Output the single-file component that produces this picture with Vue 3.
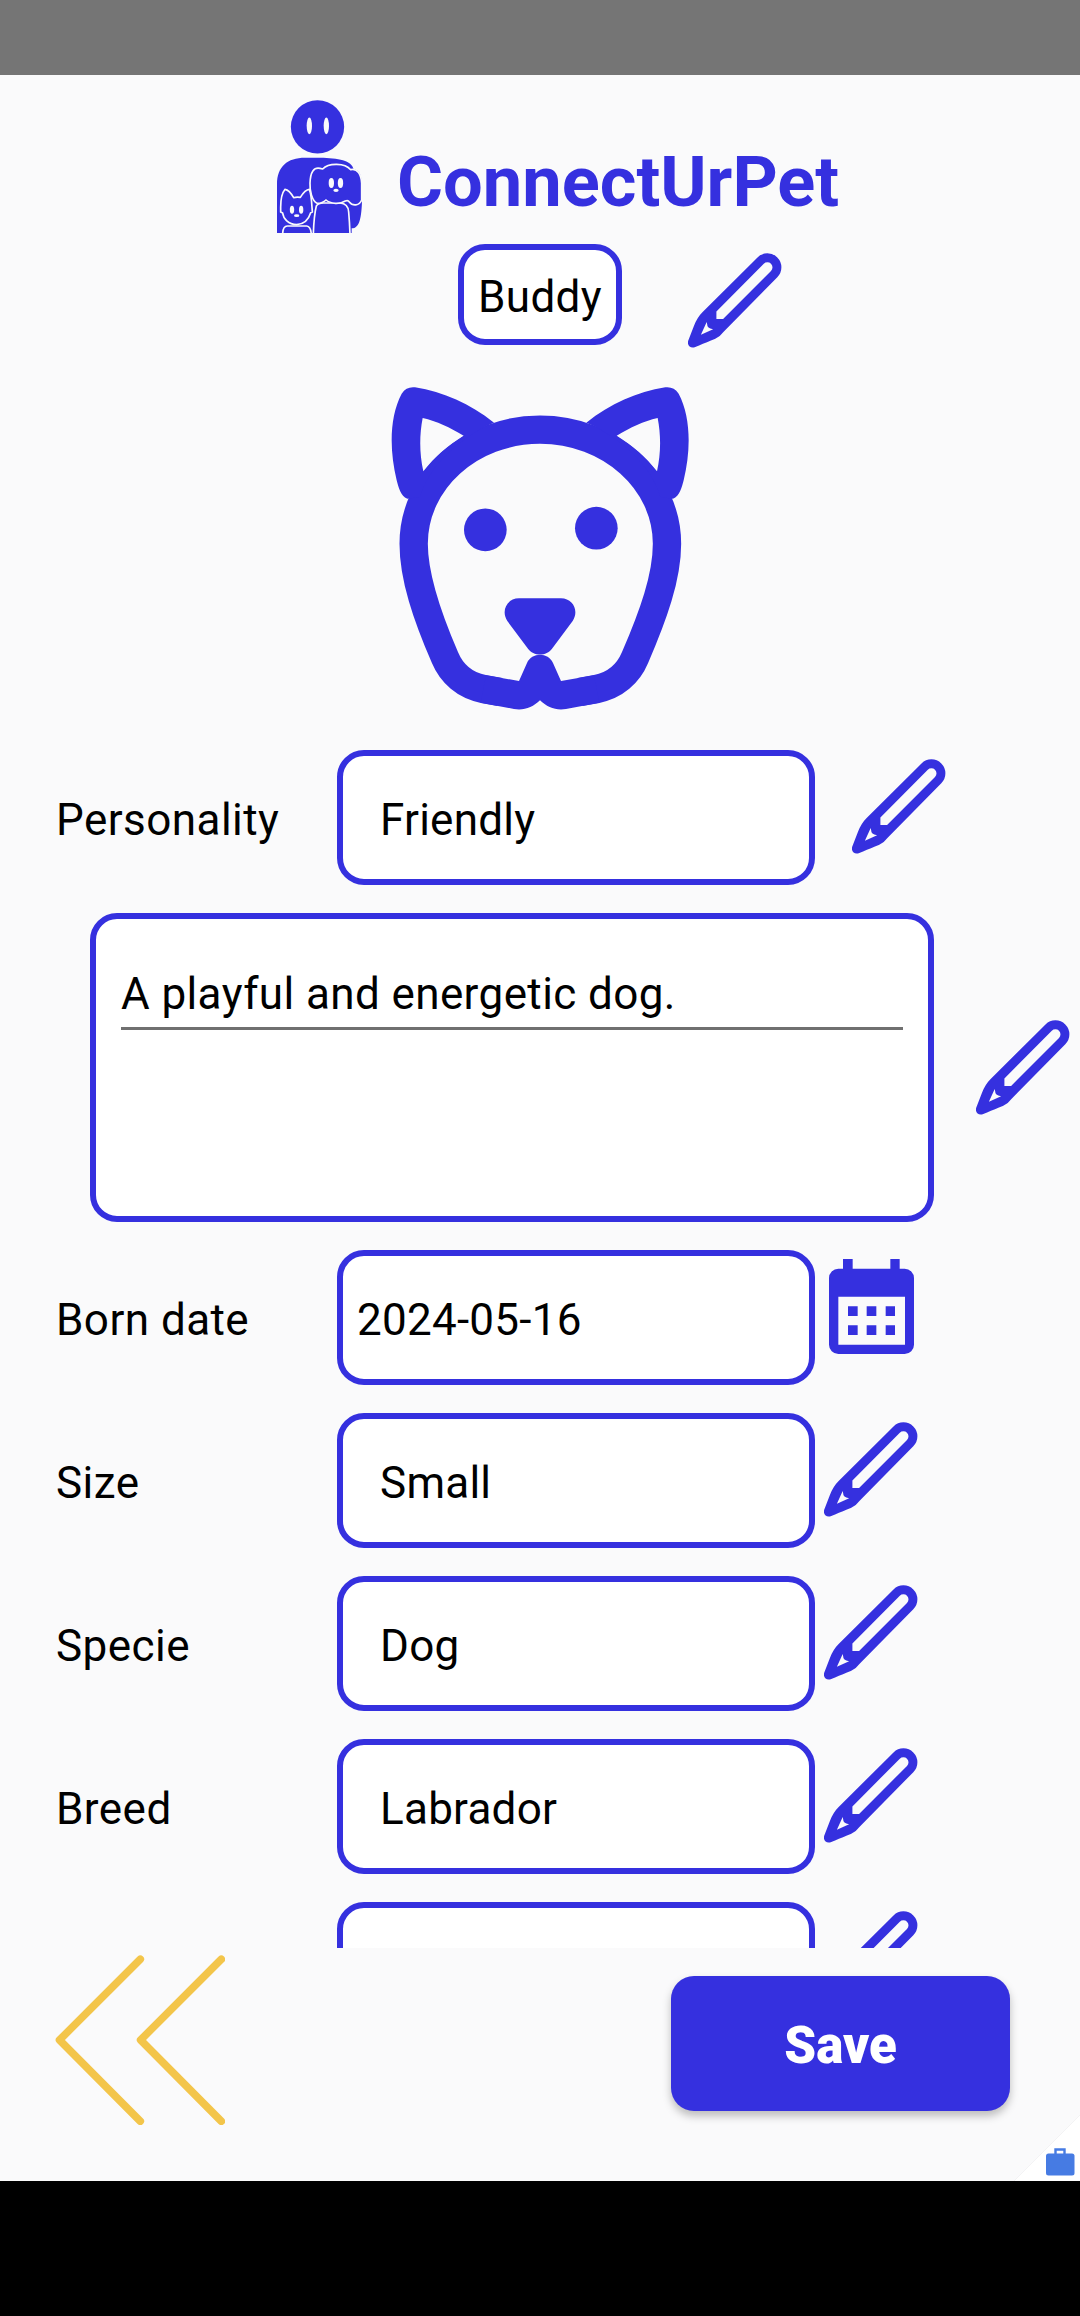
<script setup>
import { h } from 'vue'

const rows = [
  { label: 'Born date', value: '2024-05-16', icon: 'calendar' },
  { label: 'Size', value: 'Small', icon: 'pencil' },
  { label: 'Specie', value: 'Dog', icon: 'pencil' },
  { label: 'Breed', value: 'Labrador', icon: 'pencil' },
  { label: '', value: '', icon: 'pencil' },
]

const PencilIcon = () =>
  h('svg', { width: 94, height: 95, viewBox: '-0.7 0 94 95', fill: '#3530df' }, [
    h('path', {
      'fill-rule': 'evenodd',
      d: 'M68.8 4.4A14 14 0 0 1 88.6 24.2L35.2 78.4Q31.5 83.2 27 85.6Q24.5 87 6 94.2C1.5 95.8-2 91.8-.4 87.6L5.2 73Q8.4 64.6 13.7 59.3ZM75.1 10.7L27.7 58.4V66H34.4L82.3 17.9A5 5 0 0 0 75.1 10.7ZM18 69L12.2 81.8L24.4 76.2L21.6 75.4Q18.5 74.6 18.5 71.6Z',
    }),
  ])

const CalendarIcon = () =>
  h('svg', { width: 85, height: 95, viewBox: '87 57 255 285', fill: '#3530df' }, [
    h('path', {
      'fill-rule': 'evenodd',
      d: 'M129 57H158V86H271V57H299V86H314A28 28 0 0 1 342 114V314A28 28 0 0 1 314 342H115A28 28 0 0 1 87 314V114A28 28 0 0 1 115 86H129ZM115 170V314H315V170Z',
    }),
    h('path', {
      d: 'M144 199h29v29h-29zM200 199h29v29h-29zM257 199h28v29h-28zM144 256h29v29h-29zM200 256h29v29h-29zM257 256h28v29h-28z',
    }),
  ])
</script>

<template>
  <div class="screen">
    <div class="status-bar"></div>
    <main class="scroller">
      <header class="brand">
        <svg class="logo" width="86" height="133" viewBox="51 120 258 399" fill="#3530df">
          <circle cx="172.500" cy="200.500" r="80" />
          <g fill="#fafafb">
            <ellipse cx="148" cy="197.500" rx="8" ry="25" />
            <ellipse cx="199" cy="197.500" rx="8" ry="25" />
          </g>
          <path d="M51 519V372C51 320 82 293 135 293H180C235 294 275 301 281 328C300 330 306 350 306 380V425C304 470 300 505 275 505V519Z" />
          <g fill="#3530df" stroke="#fafafb" stroke-width="5" stroke-linejoin="round">
            <path d="M62 442C62 425 65 400 75 388Q88 390 101 413Q110 410 121 412Q135 389 148 388C154 405 155 425 156 442L157 456L152 458C145 482 130 492 110 494C85 494 70 476 68 459L62 456Z" />
            <path d="M68 524C68 505 73 498 82 498H140C149 499 153 505 154 524" />
            <path d="M160 524C161 490 163 462 169 438Q174 430 190 429H240C257 430 265 440 266 456Q269 490 270 524" />
            <path d="M171 430C156 422 149 393 150 370C151 335 162 321 180 325L188 327C205 308 255 308 272 329C292 323 304 345 305 370V420C298 438 278 439 268 426Q264 419 256 423Q243 431 226 430Q207 428 198 420Q188 430 171 430Z" />
          </g>
          <g fill="#fafafb">
            <ellipse cx="214" cy="369" rx="8" ry="15" />
            <ellipse cx="241.500" cy="369" rx="8" ry="15" />
            <ellipse cx="228" cy="391" rx="8" ry="5" />
            <ellipse cx="96" cy="449.500" rx="6.500" ry="12" />
            <ellipse cx="123.500" cy="449.500" rx="6.500" ry="12" />
            <ellipse cx="110" cy="467" rx="8" ry="4" />
          </g>
        </svg>
        <h1>ConnectUrPet</h1>
      </header>

      <section class="name-row">
        <div class="box name-box">Buddy</div>
        <PencilIcon />
      </section>

      <svg class="pet" width="298" height="323" viewBox="63 50 894 969" fill="#3530df">
        <path fill="none" stroke="#3530df" stroke-width="85" d="M390 965L340 956C285 945 245 910 225 862C170 735 131 620 131 520C131 331 301 178 510 178S891 331 891 520C891 620 850 735 795 862C775 910 735 945 680 956L630 965" />
        <path d="M332 997L432 1016C462 1021 489 1011 510 990C531 1011 558 1021 588 1016L688 997L672 915L573 932L549 878C535 845 485 845 471 878L447 932L348 915Z" />
        <g fill-rule="evenodd">
          <path id="ear" d="M112 385C92 378 85 350 80 330C58 240 58 140 95 70C105 55 118 49 135 51C220 65 300 100 372 157C300 185 180 270 150 380ZM158 143C148 195 148 250 160 303C195 257 235 225 281 196C240 172 200 152 158 143Z" />
          <use href="#ear" transform="matrix(-1 0 0 1 1021 0)" />
        </g>
        <circle cx="346" cy="478.500" r="64" />
        <circle cx="679" cy="473.500" r="64" />
        <path d="M447 684H573C609 684 628 722 608 752L546 835C530 858 490 858 474 835L412 752C392 722 411 684 447 684Z" />
      </svg>

      <section class="row personality">
        <span class="label">Personality</span>
        <div class="box field indented">Friendly</div>
        <PencilIcon />
      </section>

      <section class="about">
        <div class="box about-box">
          <p>A playful and energetic dog.</p>
        </div>
        <PencilIcon />
      </section>

      <section v-for="(row, i) in rows" :key="i" class="row" :class="row.icon">
        <span class="label">{{ row.label }}</span>
        <div class="box field" :class="{ indented: row.icon === 'pencil' }">{{ row.value }}</div>
        <CalendarIcon v-if="row.icon === 'calendar'" />
        <PencilIcon v-else />
      </section>
    </main>

    <footer class="actions">
      <svg class="back" width="170" height="170" viewBox="0 0 170 170" fill="none" stroke="#f3c54a" stroke-width="7.600" stroke-linecap="round" stroke-linejoin="round">
        <path d="M85.300 4.300L4.500 85L85.300 166.300M166.300 4.300L85.600 85L166.300 166.300" />
      </svg>
      <button class="save" type="button">Save</button>
      <svg class="badge" width="66" height="66" viewBox="0 0 66 66">
        <path fill="#fff" d="M66 0V66H0Z" />
        <path fill="none" stroke="#f3f3f4" d="M66 0L0 66" />
        <rect x="32" y="38.500" width="28.500" height="22" rx="2.500" fill="#467be3" />
        <path fill="none" stroke="#467be3" stroke-width="2.400" d="M41.500 39V34.500H50.500V39" />
      </svg>
    </footer>
    <div class="nav-bar"></div>
  </div>
</template>

<style>
body {
  margin: 0;
}
</style>

<style scoped>
.screen {
  display: flex;
  flex-direction: column;
  width: 1080px;
  height: 2316px;
  overflow: hidden;
  background: #fafafb;
  color: #000;
  font-family: Roboto, "Liberation Sans", sans-serif;
  font-size: 44px;
  letter-spacing: 0.4px;
}
svg {
  display: block;
  flex: none;
}
.status-bar {
  flex: none;
  height: 75px;
  background: #757575;
}
.scroller {
  flex: none;
  height: 1873px;
  overflow: hidden;
}
.brand {
  display: flex;
  height: 133px;
  padding: 25px 0 0 277px;
}
h1 {
  margin: 40px 0 0 34px;
  color: #3530df;
  font-size: 70.4px;
  font-weight: 700;
  letter-spacing: 0;
  line-height: 84px;
  white-space: nowrap;
}
.box {
  box-sizing: border-box;
  border: 6px solid #3530df;
  border-radius: 27px;
  background: #fff;
  white-space: nowrap;
}
.name-row {
  display: flex;
  gap: 66px;
  margin: 11px 0 0 458px;
}
.name-row svg {
  margin-top: 9px;
}
.name-box {
  width: 164px;
  height: 101px;
  line-height: 94px;
  text-align: center;
}
.pet {
  margin: 39px 0 0 391px;
}
.row {
  display: flex;
  height: 135px;
  margin-bottom: 28px;
  padding-left: 56px;
}
.personality {
  margin-top: 40px;
}
.label {
  width: 281px;
  line-height: 140px;
  letter-spacing: 0.45px;
}
.field {
  width: 478px;
  padding-left: 14px;
  line-height: 128px;
  letter-spacing: 0.25px;
}
.indented {
  padding-left: 37px;
}
.row svg {
  margin: 9px 0 0 9px;
}
.row.calendar svg {
  margin-left: 14px;
}
.row.personality svg {
  margin-left: 37px;
}
.about {
  display: flex;
  gap: 42px;
  height: 309px;
  margin-bottom: 28px;
  padding-left: 90px;
}
.about svg {
  margin-top: 107px;
}
.about-box {
  width: 844px;
  padding: 49px 25px 0;
}
.about-box p {
  margin: 0;
  height: 59px;
  border-bottom: 3px solid #707070;
  line-height: 52px;
}
.actions {
  position: relative;
  display: flex;
  flex: none;
  justify-content: space-between;
  height: 233px;
  padding: 0 70px 0 55px;
  box-sizing: border-box;
}
.back {
  margin-top: 7px;
}
.save {
  width: 339px;
  height: 135px;
  margin: 28px 0 0;
  padding: 4px 0 0;
  border: 0;
  border-radius: 23px;
  background: #3530df;
  box-shadow: 0 5px 9px rgba(0, 0, 0, 0.25);
  color: #fff;
  font: 900 51px Roboto, "Liberation Sans", sans-serif;
}
.badge {
  position: absolute;
  right: 0;
  bottom: 0;
}
.nav-bar {
  flex: 1;
  background: #000;
}
</style>
